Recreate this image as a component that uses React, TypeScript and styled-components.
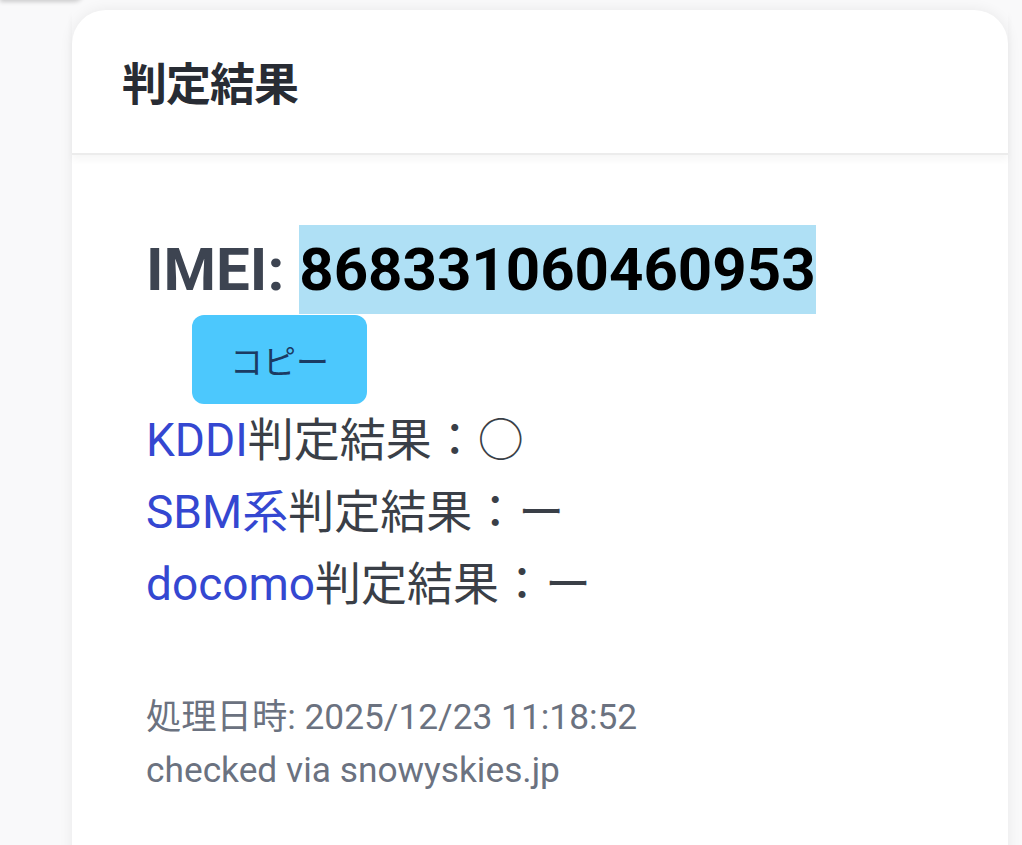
import React from 'react';
import styled, { createGlobalStyle } from 'styled-components';

const GlobalStyle = createGlobalStyle`
	html, body {
		margin: 0;
		padding: 0;
		background: #f9f9fa;
		font-family: Roboto, "Noto Sans CJK JP", "Noto Sans", sans-serif;
	}
	* {
		box-sizing: border-box;
	}
`;

type Carrier = { name: string; result: string };

const results: Carrier[] = [
	{ name: 'KDDI', result: '○' },
	{ name: 'SBM系', result: 'ー' },
	{ name: 'docomo', result: 'ー' },
];

const App: React.FC = () => {
	return (
		<>
			<GlobalStyle />
			<Page>
				<TopStub />
				<Card>
					<CardHeader>
						<Title>判定結果</Title>
					</CardHeader>
					<CardBody>
						<ImeiLine>
							IMEI: <ImeiNumber>868331060460953</ImeiNumber>
						</ImeiLine>
						<CopyButton type="button">コピー</CopyButton>
						<ResultList>
							{results.map((r) => (
								<ResultRow key={r.name}>
									<CarrierName>{r.name}</CarrierName>判定結果：{r.result}
								</ResultRow>
							))}
						</ResultList>
						<Meta>
							<div>処理日時: 2025/12/23 11:18:52</div>
							<div>checked via snowyskies.jp</div>
						</Meta>
					</CardBody>
				</Card>
			</Page>
		</>
	);
};

export default App;

const Page = styled.div`
	height: 845px;
	padding: 0 14px 0 72px;
	overflow: hidden;
`;

const TopStub = styled.div`
	width: 85px;
	height: 12px;
	margin: -12px 0 10px -72px;
	border-radius: 0 0 12px 0;
	background: #fff;
	box-shadow: 0 2px 4px rgba(0, 0, 0, 0.18);
`;

const Card = styled.section`
	min-height: 900px;
	background: #fff;
	border-radius: 34px 34px 0 0;
	box-shadow: 0 0 14px rgba(0, 0, 0, 0.07);
`;

const CardHeader = styled.header`
	height: 145px;
	padding: 0 50px;
	display: flex;
	align-items: center;
	border-bottom: 2px solid #ececec;
	box-shadow: 0 5px 7px rgba(0, 0, 0, 0.035);
`;

const Title = styled.h2`
	margin: 0;
	font-size: 45px;
	font-weight: 700;
	color: #282c34;
	letter-spacing: -1px;
`;

const CardBody = styled.div`
	padding: 70px 74px 60px;
`;

const ImeiLine = styled.div`
	font-size: 60px;
	font-weight: 700;
	line-height: 89px;
	color: #3d4451;
	white-space: nowrap;
`;

const ImeiNumber = styled.span`
	display: inline-block;
	background: #afe0f5;
	color: #000;
`;

const CopyButton = styled.button`
	display: block;
	margin: 1px 0 0 46px;
	width: 175px;
	height: 89px;
	border: none;
	border-radius: 12px;
	background: #4cc8fd;
	color: #1b3b63;
	font-family: Roboto, "Noto Sans CJK JP", sans-serif;
	font-size: 33px;
	cursor: pointer;
`;

const ResultList = styled.div`
	display: flex;
	flex-direction: column;
`;

const ResultRow = styled.div`
	font-size: 46px;
	line-height: 72px;
	color: #3a3f47;
	white-space: nowrap;
`;

const CarrierName = styled.span`
	color: #3447d1;
`;

const Meta = styled.div`
	margin-top: 71px;
	font-size: 35.3px;
	line-height: 53px;
	color: #6b7280;
`;
